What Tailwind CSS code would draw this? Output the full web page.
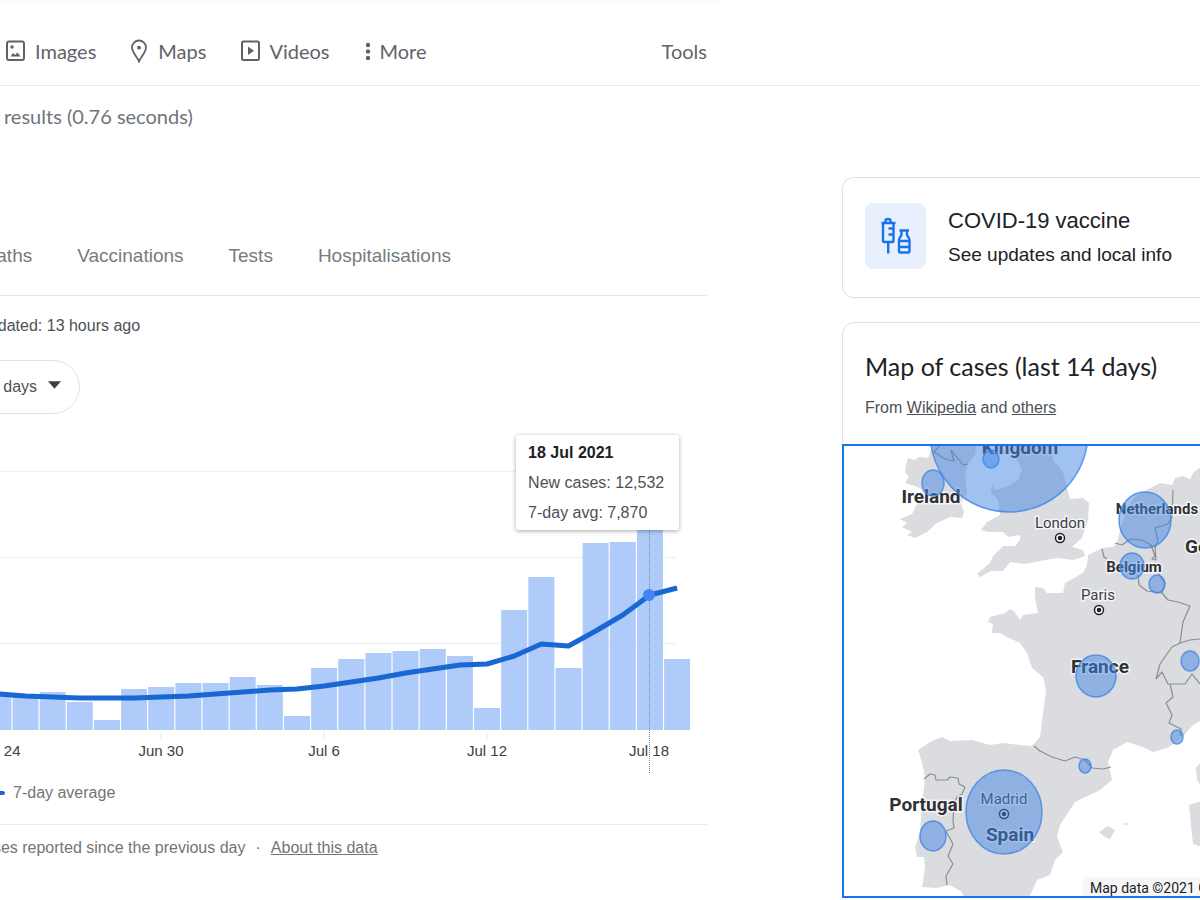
<!DOCTYPE html>
<html lang="en">

<head>
  <meta charset="UTF-8">
  <meta name="viewport" content="width=device-width, initial-scale=1.0">
  <title>Coronavirus cases</title>
  <script src="https://cdn.jsdelivr.net/npm/@tailwindcss/browser@4"></script>
</head>

<body class="font-['Liberation_Sans',Arial,sans-serif] bg-white text-[#4d5156] overflow-x-hidden">
  <header>
    <!-- bottom edge of the search box -->
    <div class="w-3/5 h-[1px] rounded-br-full bg-gray-50 shadow-sm"></div>

    <nav class="flex items-center h-[85px] pt-4 border-b border-[#ebebeb] font-['Lato',sans-serif] text-[20px] text-[#5f6368]">
      <div class="grid grid-cols-[707fr_493fr] w-full">
        <div class="flex items-center justify-between">
          <div class="flex items-center gap-[35px] pl-[6px]">
            <a href="#" class="flex items-center gap-[9px]">
              <svg class="w-5 h-[22px]" viewBox="0 0 20 22" fill="none" stroke="#5f6368" stroke-width="2">
                <rect x="1" y="1.500" width="17" height="18.500" rx="2" />
                <circle cx="6" cy="7" r="1.700" fill="#5f6368" stroke="none" />
                <path d="M4.500 16.500 7 13 9 15 11.500 12.500 14.500 16.500z" fill="#5f6368" stroke="none" />
              </svg>
              Images
            </a>
            <a href="#" class="flex items-center gap-[11px]">
              <svg class="w-4 h-6" viewBox="0 0 16 24" fill="none" stroke="#5f6368" stroke-width="1.800">
                <path d="M8 22.500C6.500 18 1 13.500 1 8.500a7 7 0 0 1 14 0C15 13.500 9.500 18 8 22.500z" />
                <circle cx="8" cy="8.700" r="1.900" fill="#5f6368" stroke="none" />
              </svg>
              Maps
            </a>
            <a href="#" class="flex items-center gap-[9px]">
              <svg class="w-[19px] h-[22px]" viewBox="0 0 19 22" fill="none" stroke="#5f6368" stroke-width="2">
                <rect x="1" y="1.500" width="17" height="18.500" rx="1.500" />
                <path d="M7 6.500v8.500l6-4.200z" fill="#5f6368" stroke="none" />
              </svg>
              Videos
            </a>
            <button type="button" class="flex items-center gap-[9px]">
              <svg class="w-[6px] h-5" viewBox="0 0 6 20" fill="#5f6368">
                <circle cx="3" cy="4" r="2.200" />
                <circle cx="3" cy="10.500" r="2.200" />
                <circle cx="3" cy="17" r="2.200" />
              </svg>
              More
            </button>
          </div>
          <button type="button">Tools</button>
        </div>
      </div>
    </nav>
  </header>

  <div class="grid grid-cols-[707fr_358fr] gap-x-[135px]">
    <main class="min-w-0">
      <p class="flex items-center h-[60px] pl-1 font-['Lato',sans-serif] text-[20px] text-[#70757a]">results (0.76 seconds)</p>

      <nav class="mt-[70px] flex items-center gap-[45px] h-[80px] pt-[2px] -ml-7 border-b border-[#e4e6e9] text-[19px] text-[#777b80]">
        <a href="#">Deaths</a>
        <a href="#">Vaccinations</a>
        <a href="#">Tests</a>
        <a href="#">Hospitalisations</a>
      </nav>

      <p class="flex items-center h-[60px] -ml-5 text-[16px]">updated: 13 hours ago</p>

      <div class="relative mt-1 -ml-10 w-[120px]">
        <select aria-label="Period" class="appearance-none w-full h-[54px] pl-[20px] rounded-full border border-[#dfe1e5] bg-white text-[16px] text-[#4d5156]">
          <option>30 days</option>
        </select>
        <svg class="absolute right-[19px] top-[21px] w-[13px] h-2 pointer-events-none" viewBox="0 0 14 8" fill="#3c4043">
          <path d="M0 0h14L7 8z" />
        </svg>
      </div>

      <!-- New cases chart -->
      <div class="relative mt-4">
        <svg id="chart" class="block w-full" viewBox="0 430 707 345">
          <path d="M0 471.500H676M0 557.500H676M0 643.500H676" stroke="#f1f2f4" stroke-width="1.500" />
          <path d="M161 731v9M324 731v9M487 731v9M649 731v9" stroke="#e8eaed" />
          <g id="bars" fill="#aecbfa"></g>
          <polyline id="average" fill="none" stroke="#1967d2" stroke-width="5" stroke-linejoin="round" />
          <path d="M649.500 530V773" stroke="#80868b" stroke-dasharray="1 1" />
          <circle cx="649" cy="595" r="6" fill="#4285f4" />
          <g class="text-[15px]" fill="#3c4043" text-anchor="middle">
            <text x="-2" y="756">Jun 24</text>
            <text x="161" y="756">Jun 30</text>
            <text x="324" y="756">Jul 6</text>
            <text x="487" y="756">Jul 12</text>
            <text x="649" y="756">Jul 18</text>
          </g>
        </svg>
        <div class="absolute left-[73%] top-[5px] h-[95px] w-[163px] flex flex-col justify-center pl-3 rounded-xs bg-white shadow-[0_1px_4px_rgba(0,0,0,0.35)] text-[16px] leading-[30px] whitespace-nowrap">
          <b class="text-[#202124]">18 Jul 2021</b>
          <span>New cases: 12,532</span>
          <span>7-day avg: 7,870</span>
        </div>
      </div>

      <div class="flex items-center gap-2 h-9 text-[16px] text-[#70757a]">
        <span class="w-[5px] h-1 rounded-r-full bg-[#1967d2]"></span>
        7-day average
      </div>

      <footer class="mt-[13px] flex items-center gap-[10px] h-[46px] border-t border-[#e8eaed] text-[16px] text-[#70757a]">
        <p class="-ml-6">cases reported since the previous day</p>
        <span>·</span>
        <a href="#" class="underline">About this data</a>
      </footer>
    </main>

    <aside class="min-w-0 pt-[91px] space-y-6">
      <a href="#" class="flex items-center gap-[22px] h-[121px] pl-[22px] pb-1 border border-r-0 border-[#dfe1e5] rounded-l-xl text-[#202124]">
        <span class="flex flex-none items-center justify-center w-[61px] h-[66px] rounded-lg bg-[#e8f0fe]">
          <svg class="w-8 h-[38px]" viewBox="0 0 32 38" fill="none" stroke="#1a73e8" stroke-width="2.400">
            <path d="M5.500 5V3.500Q5.500 2 8 2T10.500 3.500V5M1.500 6h14M3 6v17.500q0 1.500 1.500 1.500H12q1.500 0 1.500-1.500V6M13 11.500H8.500M13 17.500H8.500M8.200 25v11.500" />
            <path d="M19.500 13.500h9.500M21.500 13.500v4c0 2-2.500 2.500-2.500 5.500v11c0 1 .5 1.500 1.500 1.500h7.500c1 0 1.500-.5 1.500-1.500V23c0-3-2.500-3.500-2.500-5.500v-4M19.500 24h10M19.500 30h10" />
          </svg>
        </span>
        <span class="pt-1 whitespace-nowrap">
          <span class="block text-[22px] leading-[34px]">COVID-19 vaccine</span>
          <span class="block text-[19px] leading-[34px]">See updates and local info</span>
        </span>
      </a>

      <section class="border-t border-[#dfe1e5] rounded-tl-xl">
        <div class="h-[121px] pl-[22px] pt-[22px] border-l border-[#dfe1e5] rounded-tl-xl whitespace-nowrap">
          <h2 class="font-['Lato',sans-serif] text-[25px] leading-[42px] text-[#202124]">Map of cases (last 14 days)</h2>
          <p class="text-[16px] leading-[42px]">From <a href="#" class="underline">Wikipedia</a> and <a href="#" class="underline">others</a></p>
        </div>

        <div class="relative border-2 border-r-0 border-[#1a73e8]">
          <svg class="block w-full" viewBox="844 446 356 450" font-family="Roboto, sans-serif">
            <!-- land -->
            <g fill="#dadce0">
              <path d="M906 465 908 458 915 460 919 457 928 458 932 448 934 440 977 440 975 455 967 465 965 477 967 493 961 503 964 512 962 518 950 517 937 523 927 532 915 538 907 535 912 532 902 527 907 523 900 519 912 514 918 502 922 490 918 487 905 483 909 477 905 472z" />
              <path d="M1012 440 1015 455 1022 470 1018 480 1008 486 995 490 992 484 991 492 998 500 1000 515 987 522 981 530 988 532 1003 532 1008 537 1020 535 1020 540 1015 546 1003 546 993 556 990 563 977 574 980 577 991 571 1003 571 1010 562 1025 564 1040 561 1057 558 1073 560 1085 556 1083 550 1072 547 1082 538 1088 520 1089 503 1083 498 1070 499 1067 488 1063 472 1053 460 1050 440z" />
              <path d="M1202 466 1193 473 1190 479 1183 476 1175 478 1172 485 1160 483 1150 488 1137 495 1130 503 1122 523 1117 543 1113 547 1102 548 1088 555 1087 565 1083 573 1065 583 1063 593 1047 593 1043 588 1035 587 1035 597 1038 613 1023 615 1020 620 1015 612 1010 609 1005 613 990 617 988 622 993 624 992 633 1000 633 1007 637 1020 643 1027 653 1032 668 1043 677 1046 690 1043 713 1040 737 1032 746 1020 745 1003 743 990 745 972 740 950 741 942 737 932 741 918 750 922 762 925 777 923 797 921 817 920 833 915 847 917 857 924 857 925 867 922 887 937 888 950 885 962 892 964 900 1028 900 1037 880 1050 875 1055 860 1063 852 1057 837 1060 825 1075 802 1100 790 1112 780 1108 762 1113 750 1127 742 1143 747 1153 752 1167 748 1180 740 1193 725 1202 720z" />
              <path d="M1099 832 1108 826 1115 830 1110 839 1105 837zM1121 824 1127 823 1128 825zM1196 768 1202 760V788L1197 780zM1189 805 1202 801V847L1193 844z" />
            </g>
            <!-- borders -->
            <g fill="none" stroke="#8a8d91" stroke-width="1.200" stroke-linejoin="round">
              <path d="M941 444 934 452 945 459 954 461 951 450 963 465 968 464" />
              <path d="M1102 549 1104 557 1107 559M1138 575 1139 585 1147 591 1162 593 1168 600 1178 602 1190 606 1183 622 1180 643 1172 647 1167 654 1160 664 1156 679" />
              <path d="M1115 543 1122 545 1131 539 1142 540 1151 545 1155 556 1152 559 1156 560 1155 548 1158 540 1155 528 1168 524 1172 517 1173 490M1162 593 1165 583 1158 573" />
              <path d="M1180 643 1190 640 1200 639M1156 679 1162 672 1168 684 1185 684 1192 674 1200 684M1170 684 1173 697 1166 703 1172 715 1169 723 1181 729 1181 736" />
              <path d="M1034 746 1040 751 1052 757 1065 761 1075 757 1085 760 1092 768 1103 769 1111 767" />
              <path d="M924 779 930 774 935 775 936 780 947 780 950 777 958 778 959 784 965 787 962 794 957 797 954 805 953 820 954 828 946 831 953 844 948 856 953 864 946 876 947 885" />
            </g>
            <g font-size="19" font-weight="700" fill="#303134" stroke="#fff" stroke-opacity="0.700" stroke-width="3" paint-order="stroke" text-anchor="middle">
              <text x="1020" y="454">Kingdom</text>
              <text x="931" y="503">Ireland</text>
              <text x="1157" y="514" font-size="15">Netherlands</text>
              <text x="1134" y="572" font-size="15">Belgium</text>
              <text x="1100" y="673">France</text>
              <text x="926" y="811">Portugal</text>
              <text x="1010" y="841">Spain</text>
              <text x="1185" y="553" text-anchor="start">Germany</text>
              <g font-size="15" font-weight="400" fill="#3c4043">
                <text x="1060" y="528">London</text>
                <text x="1098" y="600">Paris</text>
                <text x="1004" y="804">Madrid</text>
              </g>
            </g>
            <g fill="#fff" stroke="#202124" stroke-width="1.500">
              <circle cx="1060" cy="538" r="4.500" />
              <circle cx="1099" cy="610" r="4.500" />
              <circle cx="1004" cy="814" r="4.500" />
            </g>
            <g fill="#202124">
              <circle cx="1060" cy="538" r="2.300" />
              <circle cx="1099" cy="610" r="2.300" />
              <circle cx="1004" cy="814" r="2.300" />
            </g>
            <!-- case counts -->
            <g fill="#4285e4" fill-opacity="0.500" stroke="#4285e4" stroke-opacity="0.800" stroke-width="1.500">
              <circle cx="1009" cy="433" r="79" />
              <ellipse cx="933" cy="483" rx="11" ry="13" />
              <ellipse cx="991" cy="459" rx="8" ry="9" />
              <ellipse cx="1145" cy="520" rx="26" ry="28" />
              <ellipse cx="1132" cy="566" rx="12" ry="13" />
              <ellipse cx="1157" cy="584" rx="8" ry="9" />
              <ellipse cx="1096" cy="676" rx="20" ry="21" />
              <ellipse cx="1190" cy="661" rx="9" ry="10" />
              <ellipse cx="1177" cy="737" rx="6" ry="7" />
              <ellipse cx="1085" cy="766" rx="6" ry="7" />
              <ellipse cx="1004" cy="812" rx="38" ry="42" />
              <ellipse cx="933" cy="836" rx="13" ry="15" />
            </g>
          </svg>
          <div class="absolute right-0 bottom-0 w-[117px] h-[19px] pl-[7px] overflow-hidden whitespace-nowrap bg-[#f5f5f5]/80 font-['Roboto',sans-serif] text-[14px] leading-[22px] text-[#202124]">Map data ©2021 Google</div>
        </div>
      </section>
    </aside>
  </div>

  <script>
    // top of each daily bar and of the 7-day average, in chart units
    const tops = [697, 697, 692, 702, 720, 689, 687, 683, 683, 677, 685, 716, 668, 659, 653, 651, 649, 656, 708, 610, 577, 668, 543, 542, 520, 659];
    const average = [694, 696, 697, 698, 698, 698, 697, 696, 694, 692, 690, 689, 686, 682, 678, 673, 669, 665, 664, 656, 644, 646, 631, 615, 595, 588];
    const step = 27.15;
    const baseline = 730;

    const bars = document.getElementById('bars');
    tops.forEach((top, i) => {
      const bar = document.createElementNS('http://www.w3.org/2000/svg', 'rect');
      bar.setAttribute('x', 12.5 + step * (i - 1));
      bar.setAttribute('y', top);
      bar.setAttribute('width', 26);
      bar.setAttribute('height', baseline - top);
      bars.appendChild(bar);
    });

    document.getElementById('average').setAttribute('points',
      average.map((y, i) => `${25.5 + step * (i - 1)},${y}`).join(' '));
  </script>
</body>

</html>
